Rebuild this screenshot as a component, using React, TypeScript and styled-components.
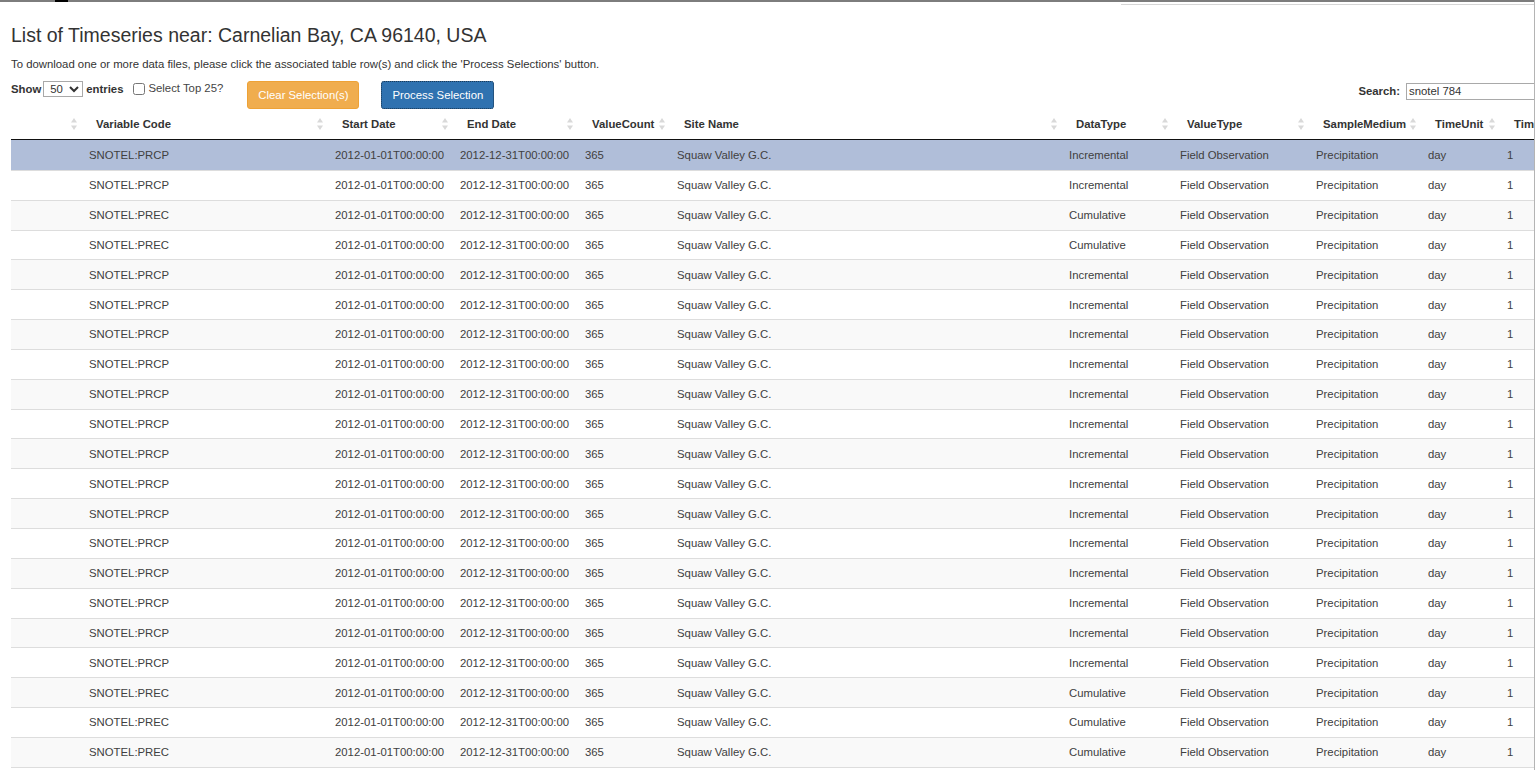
import { FC } from 'react';
import styled, { createGlobalStyle } from 'styled-components';

const GlobalStyle = createGlobalStyle`
    html, body {
        margin: 0;
        padding: 0;
        overflow: hidden;
        background: #fff;
    }
    body {
        font-family: "Liberation Sans", Arial, sans-serif;
        font-size: 11.35px;
        color: #333;
    }
`;

const StyledPage = styled.div`
    width: 1535px;
    height: 770px;
    box-sizing: border-box;
    border-right: 1px solid #b4b4b4;
    overflow: hidden;
`;

const StyledTopEdge = styled.div`
    height: 2px;
    background: #7d7d7d;
    span {
        display: block;
        width: 13px;
        height: 2px;
        margin-left: 55px;
        background: #000;
    }
`;

const StyledSubEdge = styled.div`
    height: 1px;
    margin: 2px 0 0 1121px;
    background: #d6d6d6;
`;

const StyledContent = styled.div`
    padding-left: 11px;
`;

const StyledTitle = styled.h3`
    margin: 19px 0 0;
    font-size: 19.5px;
    line-height: 22px;
    font-weight: normal;
    color: #333;
`;

const StyledHint = styled.p`
    margin: 11px 0 0;
    line-height: 14px;
`;

const StyledToolbar = styled.div`
    display: flex;
    align-items: flex-start;
    justify-content: space-between;
    margin-top: 10px;
    height: 28px;
`;

const StyledLeftGroup = styled.div`
    display: flex;
    align-items: flex-start;
`;

const StyledLengthLabel = styled.label`
    display: flex;
    align-items: center;
    height: 16px;
    font-weight: bold;
    select {
        width: 40px;
        height: 16px;
        margin: 0 3px 0 2px;
        padding: 0 0 0 2px;
        font-family: "Liberation Sans", Arial, sans-serif;
        font-size: 11.35px;
        border: 1px solid #a9a9a9;
        background: #fff;
        color: #333;
    }
`;

const StyledCheckLabel = styled.label`
    display: flex;
    align-items: center;
    margin: 0 0 0 10px;
    height: 14px;
    color: #444;
    input {
        width: 12px;
        height: 12px;
        margin: 2px 3px 0 0;
    }
`;

const StyledButton = styled.button<{ $variant: 'warning' | 'primary'; $focused?: boolean }>`
    height: 28px;
    margin-left: ${(p) => (p.$variant === 'warning' ? '24px' : '22px')};
    padding: 0 10px;
    border-radius: 3px;
    font-family: "Liberation Sans", Arial, sans-serif;
    font-size: 11.35px;
    color: #fff;
    cursor: pointer;
    background: ${(p) => (p.$variant === 'warning' ? '#f0ad4e' : '#2f72b0')};
    border: 1px solid ${(p) => (p.$variant === 'warning' ? '#eea236' : '#2e6da4')};
    outline: ${(p) => (p.$focused ? '1px dotted #1a3a5a' : 'none')};
    outline-offset: -1px;
`;

const StyledSearch = styled.label`
    display: flex;
    align-items: center;
    margin-right: -32px;
    height: 18px;
    padding-top: 1px;
    font-weight: bold;
    input {
        width: 160px;
        height: 17px;
        box-sizing: border-box;
        margin-left: 6px;
        padding: 0 2px;
        border: 1px solid #a9a9a9;
        font-family: "Liberation Sans", Arial, sans-serif;
        font-size: 11.35px;
        color: #333;
    }
`;

const StyledTable = styled.table`
    table-layout: fixed;
    width: 1588px;
    border-collapse: separate;
    border-spacing: 0;
`;

const StyledTh = styled.th`
    height: 31px;
    box-sizing: border-box;
    padding: 0 4px 0 15px;
    border-bottom: 1px solid #111;
    text-align: left;
    font-weight: bold;
    white-space: nowrap;
    > div {
        display: flex;
        align-items: center;
        justify-content: space-between;
    }
`;

const StyledRow = styled.tr<{ $selected?: boolean; $odd?: boolean }>`
    background: ${(p) => (p.$selected ? '#b0bed9' : p.$odd ? '#f9f9f9' : '#fff')};
    td {
        height: 29.85px;
        box-sizing: border-box;
        padding: 0 8px;
        border-top: 1px solid #ddd;
        white-space: nowrap;
        overflow: hidden;
        color: #404040;
    }
    &:first-child td {
        border-top: 0;
    }
`;

const SortIcon: FC = () => (
    <svg width='6' height='12' viewBox='0 0 6 12'>
        <polygon points='3,0 6,4.5 0,4.5' fill='#d9d9d9' />
        <polygon points='0,7.5 6,7.5 3,12' fill='#d9d9d9' />
    </svg>
);

const columns = [
    { title: '', width: 70 },
    { title: 'Variable Code', width: 246 },
    { title: 'Start Date', width: 125 },
    { title: 'End Date', width: 125 },
    { title: 'ValueCount', width: 92 },
    { title: 'Site Name', width: 392 },
    { title: 'DataType', width: 111 },
    { title: 'ValueType', width: 136 },
    { title: 'SampleMedium', width: 112 },
    { title: 'TimeUnit', width: 79 },
    { title: 'TimeSupport', width: 100 },
];

// PRCP = Incremental, PREC = Cumulative
const codes = [
    'PRCP', 'PRCP', 'PREC', 'PREC',
    'PRCP', 'PRCP', 'PRCP', 'PRCP', 'PRCP', 'PRCP', 'PRCP',
    'PRCP', 'PRCP', 'PRCP', 'PRCP', 'PRCP', 'PRCP', 'PRCP',
    'PREC', 'PREC', 'PREC', 'PREC',
];

const App: FC = () => {
    return (
        <>
            <GlobalStyle />
            <StyledPage>
                <StyledTopEdge><span /></StyledTopEdge>
                <StyledSubEdge />
                <StyledContent>
                    <StyledTitle>List of Timeseries near: Carnelian Bay, CA 96140, USA</StyledTitle>
                    <StyledHint>
                        To download one or more data files, please click the associated table row(s) and click the 'Process Selections' button.
                    </StyledHint>
                    <StyledToolbar>
                        <StyledLeftGroup>
                            <StyledLengthLabel>
                                Show
                                <select defaultValue='50'>
                                    <option value='10'>10</option>
                                    <option value='25'>25</option>
                                    <option value='50'>50</option>
                                    <option value='100'>100</option>
                                </select>
                                entries
                            </StyledLengthLabel>
                            <StyledCheckLabel>
                                <input type='checkbox' />
                                Select Top 25?
                            </StyledCheckLabel>
                            <StyledButton $variant='warning'>Clear Selection(s)</StyledButton>
                            <StyledButton $variant='primary' $focused>Process Selection</StyledButton>
                        </StyledLeftGroup>
                        <StyledSearch>
                            Search:
                            <input type='text' defaultValue='snotel 784' />
                        </StyledSearch>
                    </StyledToolbar>
                    <StyledTable>
                        <colgroup>
                            {columns.map((c, i) => <col key={i} style={{ width: c.width }} />)}
                        </colgroup>
                        <thead>
                            <tr>
                                {columns.map((c, i) => (
                                    <StyledTh key={i}>
                                        <div><span>{c.title}</span><SortIcon /></div>
                                    </StyledTh>
                                ))}
                            </tr>
                        </thead>
                        <tbody>
                            {codes.map((code, i) => (
                                <StyledRow key={i} $selected={i === 0} $odd={i % 2 === 0}>
                                    <td></td>
                                    <td>SNOTEL:{code}</td>
                                    <td>2012-01-01T00:00:00</td>
                                    <td>2012-12-31T00:00:00</td>
                                    <td>365</td>
                                    <td>Squaw Valley G.C.</td>
                                    <td>{code === 'PRCP' ? 'Incremental' : 'Cumulative'}</td>
                                    <td>Field Observation</td>
                                    <td>Precipitation</td>
                                    <td>day</td>
                                    <td>1</td>
                                </StyledRow>
                            ))}
                        </tbody>
                    </StyledTable>
                </StyledContent>
            </StyledPage>
        </>
    );
};

export default App;
